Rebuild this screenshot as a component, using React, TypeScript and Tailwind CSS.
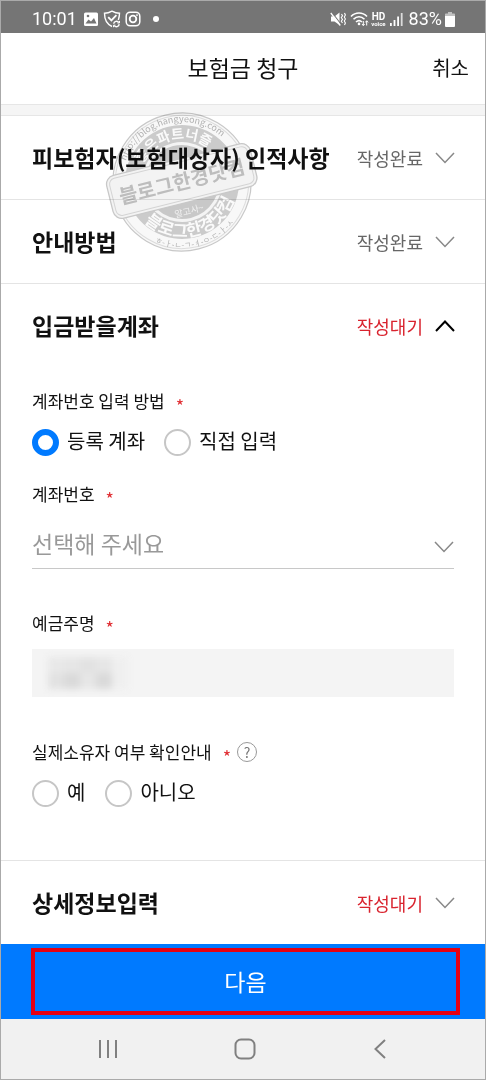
import { useState, type ReactNode } from "react";

function Chevron({ up = false, className }: { up?: boolean; className: string }) {
  return (
    <svg viewBox="0 0 20 12" className={`h-3 w-5 shrink-0 ${className}`} fill="none" stroke="currentColor" aria-hidden="true">
      <path d={up ? "M1 11 L10 1.5 L19 11" : "M1 1 L10 10.5 L19 1"} strokeWidth={up ? 2 : 1.5} />
    </svg>
  );
}

function StatusBar() {
  return (
    <div className="flex h-8 items-center justify-between bg-[#757575] pl-[31px] pr-[30px] pt-1 font-[Roboto,sans-serif] text-lg text-white">
      <div className="flex items-center">
        <span>10:01</span>
        <svg viewBox="0 0 16 16" className="ml-1.5 h-4 w-4" aria-hidden="true">
          <rect x="1" y="1.5" width="14" height="13.5" rx="1.5" fill="#fff" />
          <path d="M2.5 12.5 L5.5 8.5 L8 10.5 L11 7 L13.5 12.5Z" fill="#757575" />
          <circle cx="5" cy="5" r="1.3" fill="#757575" />
        </svg>
        <svg viewBox="0 0 18 18" className="ml-1 h-[18px] w-[18px]" fill="none" stroke="#fff" strokeWidth="1.4" aria-hidden="true">
          <path d="M9 16.5 C4.5 14.5 1.5 9.5 1.5 3.3 C4.5 3.3 6.5 2.6 9 1.2 C11.5 2.6 13.5 3.3 16.5 3.3 C16.5 6 16 8 15.3 10" />
          <path d="M5.2 7.2 L8.4 10.4 L13.4 5.2" strokeWidth="1.8" />
          <path d="M10.7 13.8 A2.8 2.8 0 0 1 15.8 12.5 M16.2 14.2 A2.8 2.8 0 0 1 11.2 15.6" />
          <path d="M16.5 10.9 V13 H14.4 M10.5 17.2 V15.2 H12.5" strokeWidth="1" />
        </svg>
        <svg viewBox="0 0 16 16" className="ml-1 h-4 w-4" fill="none" stroke="#fff" strokeWidth="1.5" aria-hidden="true">
          <rect x="1.2" y="1.2" width="13.6" height="13.6" rx="4" />
          <circle cx="8" cy="8" r="3.3" strokeWidth="1.8" />
          <circle cx="12" cy="4.1" r=".9" fill="#fff" stroke="none" />
        </svg>
        <span className="ml-3 h-1.5 w-1.5 rounded-full bg-white" />
      </div>
      <div className="flex items-center">
        <svg viewBox="0 0 16 16" className="h-4 w-4" fill="none" stroke="#fff" aria-hidden="true">
          <path d="M1 5.5 H4.5 L9.5 1.5 V14 L4.5 10.5 H1Z" fill="#fff" stroke="none" />
          <path d="M2 1.5 L12 14.5" stroke="#757575" strokeWidth="1.2" />
          <path d="M.8 2 L10.3 14.5" strokeWidth="1.3" />
          <path d="M11.5 3 L12.5 4.8 L11.3 6.6 L12.5 8.4 L11.3 10.2 L12.5 12 M14.5 2 L15.4 4 L14.3 6 L15.4 8 L14.3 10 L15.4 12 L14.5 14" strokeWidth="1.1" />
        </svg>
        <svg viewBox="0 0 19 16" className="ml-1 h-4 w-[19px]" fill="none" stroke="#fff" strokeWidth="1.6" aria-hidden="true">
          <path d="M1 5.5 C5.5 .8 12.5 .8 17 5.5 M3.5 8.3 C6.8 5 11.2 5 14.5 8.3 M6 11 C8 9.2 10 9.2 12 11" />
          <circle cx="9" cy="12.9" r="1.3" fill="#fff" stroke="none" />
          <path d="M13.3 10 V14.5 M12 13 L13.3 14.6 L14.6 13 M16.7 14.5 V9.8 M15.3 11.4 L16.7 9.8 L18.1 11.4" strokeWidth="1" />
        </svg>
        <span className="ml-0.5 flex flex-col items-center font-bold">
          <span className="text-[10px] leading-[8px]">HD</span>
          <span className="text-[6px] leading-[5px]">voice</span>
        </span>
        <svg viewBox="0 0 13 14" className="ml-1 h-3.5 w-[13px]" fill="#fff" aria-hidden="true">
          <path d="M0 11h1.8v3H0z M3.6 8h1.8v6H3.6z M7.2 4.5H9V14H7.2z" />
          <path d="M10.8 1h1.8v13h-1.8z" opacity=".75" />
        </svg>
        <span className="ml-1.5">83%</span>
        <svg viewBox="0 0 10 15" className="ml-[3px] h-[15px] w-2.5" fill="#fff" aria-hidden="true">
          <path d="M3 0h4v1.5h2.2a.8.8 0 0 1 .8.8V4H0V2.3a.8.8 0 0 1 .8-.8H3z" opacity=".55" />
          <path d="M0 4h10v10a1 1 0 0 1-1 1H1a1 1 0 0 1-1-1z" />
        </svg>
      </div>
    </div>
  );
}

function Stamp() {
  return (
    <svg viewBox="0 0 154 144" className="pointer-events-none absolute -top-1.5 left-[103px] h-36 w-[154px] overflow-visible mix-blend-multiply" fontFamily="'Noto Sans CJK KR', sans-serif" aria-hidden="true">
      <defs>
        <path id="outer-top" d="M18 72 A60 60 0 0 1 138 72" />
        <path id="outer-bottom" d="M12 72 A66 66 0 0 0 144 72" />
        <path id="inner-top" d="M35 72 A43 43 0 0 1 121 72" />
        <path id="inner-bottom" d="M23 72 A55 55 0 0 0 133 72" />
      </defs>
      <g transform="rotate(-14 78 72)">
        <circle cx="78" cy="72" r="69" fill="#f8f8f8" stroke="#c8c8c8" strokeWidth="1.2" />
        <circle cx="78" cy="72" r="66.5" fill="none" stroke="#dcdcdc" />
        <circle cx="78" cy="72" r="57" fill="#cbcbcb" />
        <circle cx="78" cy="72" r="40" fill="#f4f4f4" />
        <circle cx="78" cy="72" r="37" fill="#c8c8c8" />
        <text fontSize="9" fill="#b0b0b0" textAnchor="middle"><textPath href="#outer-top" startOffset="50%">http://blog.hangyeong.com</textPath></text>
        <text fontSize="8" fill="#b4b4b4" textAnchor="middle"><textPath href="#outer-bottom" startOffset="50%">ㅎ-ㅏ-ㄴ-ㄱ-ㅕ-ㅇ-ㄷ-ㅏ-ㅅ</textPath></text>
        <text fontSize="14" fontWeight="700" fill="#fafafa" textAnchor="middle"><textPath href="#inner-top" startOffset="50%">좋은파트너즐</textPath></text>
        <text fontSize="17" fontWeight="700" fill="#fafafa" textAnchor="middle"><textPath href="#inner-bottom" startOffset="50%">블로그한경닷컴</textPath></text>
        <text x="78" y="105" fontSize="9" fill="#f0f0f0" textAnchor="middle">알고사~</text>
        <rect x="4" y="49" width="148" height="44" rx="9" fill="#f3f3f3" stroke="#c8c8c8" strokeWidth="1.3" />
        <rect x="7" y="52" width="142" height="38" rx="6" fill="#f3f3f3" stroke="#d4d4d4" />
        <text x="78" y="79" fontSize="20" fontWeight="700" fill="#bdbdbd" textAnchor="middle">블로그한경닷컴</text>
      </g>
    </svg>
  );
}

function SectionRow({ title, status, pending = false, open = false }: { title: string; status: string; pending?: boolean; open?: boolean }) {
  return (
    <h2>
      <button type="button" aria-expanded={open} className="flex h-[83px] w-full items-center pl-[31px] pr-[30px] text-left">
        <span className="flex-1 whitespace-nowrap text-[23px] font-bold text-[#111]">{title}</span>
        <span className={`mr-3 text-lg ${pending ? "text-[#d9232e]" : "text-[#666]"}`}>{status}</span>
        <Chevron up={open} className={open ? "text-black" : "text-[#888]"} />
      </button>
    </h2>
  );
}

function Required() {
  return <span className="ml-[11px] align-[-5px] text-lg leading-none text-[#e02b30]" aria-hidden="true">*</span>;
}

function Radio({ name, value, checked, onSelect, children }: { name: string; value: string; checked: boolean; onSelect: (value: string) => void; children: ReactNode }) {
  return (
    <label className="flex items-center gap-2 text-xl leading-7">
      <input
        type="radio"
        name={name}
        value={value}
        checked={checked}
        onChange={() => onSelect(value)}
        className="mt-1 h-[27px] w-[27px] appearance-none rounded-full border-2 border-[#c6c6c6] bg-white checked:border-[6px] checked:border-[#007aff]"
      />
      {children}
    </label>
  );
}

export default function App() {
  const [method, setMethod] = useState("registered");
  const [owner, setOwner] = useState("");

  return (
    <div className="min-h-screen border border-[#aaa] bg-white font-['Noto_Sans_CJK_KR',sans-serif] text-[#111]">
      <StatusBar />
      <header className="grid h-[71px] grid-cols-[1fr_auto_1fr] items-center px-4 pb-0.5">
        <h1 className="col-start-2 text-[23px]">보험금 청구</h1>
        <button type="button" className="justify-self-end text-xl">취소</button>
      </header>
      <main>
        <div className="h-3 border-y border-[#e6e6e6] bg-[#f5f5f5]" />
        <div className="relative">
          <div className="divide-y divide-[#e4e4e4]">
            <SectionRow title="피보험자(보험대상자) 인적사항" status="작성완료" />
            <SectionRow title="안내방법" status="작성완료" />
            <SectionRow title="입금받을계좌" status="작성대기" pending open />
          </div>
          <Stamp />
        </div>

        <form className="border-b border-[#e4e4e4] px-[31px] pb-[53px] pt-[22px]">
          <fieldset>
            <legend className="h-6 text-[17px] leading-6">계좌번호 입력 방법<Required /></legend>
            <div className="flex gap-[19px] pt-3">
              <Radio name="method" value="registered" checked={method === "registered"} onSelect={setMethod}>등록 계좌</Radio>
              <Radio name="method" value="direct" checked={method === "direct"} onSelect={setMethod}>직접 입력</Radio>
            </div>
          </fieldset>

          <div className="pt-[26px]">
            <label htmlFor="account" className="block h-6 text-[17px] leading-6">계좌번호<Required /></label>
            <div className="mt-3 grid items-center border-b border-[#c8c8c8]">
              <select id="account" defaultValue="" className="col-start-1 row-start-1 h-[50px] w-full appearance-none bg-transparent text-[23px] text-[#999]">
                <option value="">선택해 주세요</option>
              </select>
              <span className="pointer-events-none col-start-1 row-start-1 justify-self-end pt-2"><Chevron className="text-[#888]" /></span>
            </div>
          </div>

          <div className="pt-[42px]">
            <label htmlFor="holder" className="block h-6 text-[17px] leading-6">예금주명<Required /></label>
            <div className="mt-3.5 grid items-center">
              <input id="holder" type="text" readOnly className="col-start-1 row-start-1 h-12 w-full bg-[#f4f4f4] px-4" />
              <div className="pointer-events-none col-start-1 row-start-1 ml-4 grid h-8 w-20 grid-cols-5 blur-[3px]" aria-hidden="true">
                <span className="bg-[#e8e8e8]" /><span className="bg-[#e6e6e6]" /><span className="bg-[#e2e2e2]" /><span className="bg-[#e6e6e6]" /><span className="bg-[#efefef]" />
                <span className="bg-[#e2e2e2]" /><span className="bg-[#dadada]" /><span className="bg-[#e6e6e6]" /><span className="bg-[#dadada]" /><span className="bg-[#efefef]" />
              </div>
            </div>
          </div>

          <div role="radiogroup" aria-labelledby="owner-label" className="pt-[43px]">
            <div className="flex h-6 items-center text-[17px] leading-6">
              <span id="owner-label" className="h-6">실제소유자 여부 확인안내<Required /></span>
              <button type="button" aria-label="도움말" className="ml-1.5 flex h-5 w-5 items-center justify-center rounded-full border border-[#999] text-sm leading-none text-[#777]">?</button>
            </div>
            <div className="flex gap-5 pt-3">
              <Radio name="owner" value="yes" checked={owner === "yes"} onSelect={setOwner}>예</Radio>
              <Radio name="owner" value="no" checked={owner === "no"} onSelect={setOwner}>아니오</Radio>
            </div>
          </div>
        </form>

        <SectionRow title="상세정보입력" status="작성대기" pending />
      </main>

      <div className="bg-[#007aff] py-1 pl-[30px] pr-[25px]">
        <button type="button" className="block h-[67px] w-full border-4 border-[#e60012] text-[23px] text-white">다음</button>
      </div>
      <nav className="flex h-[60px] items-center justify-between bg-[#f1f1f1] pl-[97px] pr-[94px] text-[#808080]">
        <button type="button" aria-label="최근 앱">
          <svg viewBox="0 0 20 20" className="h-5 w-5" stroke="currentColor" strokeWidth="2"><path d="M2 1V19M10 1V19M18 1V19" /></svg>
        </button>
        <button type="button" aria-label="홈">
          <svg viewBox="0 0 22 22" className="h-[22px] w-[22px]" fill="none" stroke="currentColor" strokeWidth="2"><rect x="1.5" y="1.5" width="19" height="19" rx="5.5" /></svg>
        </button>
        <button type="button" aria-label="뒤로">
          <svg viewBox="0 0 20 20" className="h-5 w-5" fill="none" stroke="currentColor" strokeWidth="2"><path d="M14 1L4.5 10L14 19" /></svg>
        </button>
      </nav>
    </div>
  );
}
